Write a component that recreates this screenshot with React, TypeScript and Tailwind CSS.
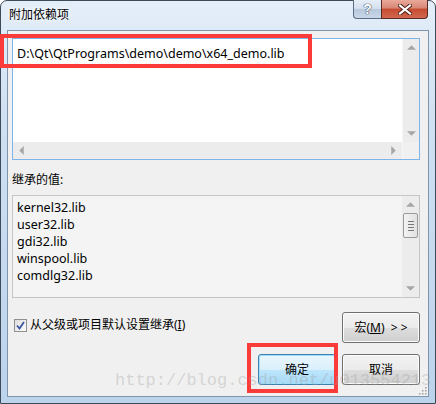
import React from 'react';

const FONT = 'font-["Noto_Sans","Noto_Sans_CJK_SC",sans-serif]';

// Windows 7 style arrow glyph for scrollbars
const Arrow = ({ dir }: { dir: 'up' | 'down' | 'left' | 'right' }) => {
    const pts = {
        up: '0,4 4,0 8,4',
        down: '0,0 8,0 4,4',
        left: '4,0 4,8 0,4',
        right: '0,0 0,8 4,4',
    }[dir];
    const horiz = dir === 'left' || dir === 'right';
    return (
        <svg width={horiz ? 5 : 9} height={horiz ? 9 : 5} viewBox={horiz ? '0 0 4 8' : '0 0 8 4'}>
            <polygon points={pts} fill="#a6a6a6" />
        </svg>
    );
};

const Button = ({ children, primary }: { children: React.ReactNode; primary?: boolean }) => (
    <div
        className={
            'w-[78px] h-[31px] rounded-[3px] border flex items-center justify-center text-[12px] text-black ' +
            (primary
                ? 'border-[#3c7fb1] bg-[linear-gradient(#eaf6fd_0%,#d9f0fc_50%,#bee6fd_51%,#a7d9f5_100%)] shadow-[inset_0_0_0_1px_#9fe0ff]'
                : 'border-[#707070] bg-[linear-gradient(#f2f2f2_0%,#ebebeb_50%,#dddddd_51%,#cfcfcf_100%)] shadow-[inset_0_0_0_1px_#fcfcfc]')
        }
    >
        {children}
    </div>
);

export default function App() {
    const inherited = ['kernel32.lib', 'user32.lib', 'gdi32.lib', 'winspool.lib', 'comdlg32.lib'];

    return (
        <div className={`w-[436px] h-[404px] relative overflow-hidden ${FONT}`}>
            {/* glass frame */}
            <div className="absolute inset-0 rounded-t-[7px] border border-[#3d4a5a] bg-[linear-gradient(180deg,#e4eef9_0%,#cfe0f2_30%,#bcd3ec_100%)]" />

            <div className="relative flex flex-col h-full">
                {/* title bar */}
                <div className="h-[30px] flex items-start">
                    <div className="pl-[9px] pt-[6px] text-[12px] leading-[18px] text-black [text-shadow:0_0_6px_#ffffff,0_0_3px_#ffffff]">
                        附加依赖项
                    </div>
                    <div className="ml-auto mr-[8px] flex">
                        <div className="w-[28px] h-[19px] rounded-bl-[4px] border border-t-0 border-r-0 border-[#5c6e85] bg-[linear-gradient(#e6eef7_0%,#d3dfed_50%,#b7c8dc_51%,#c9d8e8_100%)] flex items-center justify-center">
                            <span className="text-[14px] font-bold leading-none text-white [text-shadow:0_0_1px_#3b4c62,0_0_1px_#3b4c62,0_0_1px_#3b4c62] font-['Liberation_Sans',sans-serif]">?</span>
                        </div>
                        <div className="w-[47px] h-[19px] rounded-br-[4px] border border-t-0 border-[#5a2a22] bg-[linear-gradient(#e9a99b_0%,#d88674_45%,#c74a32_50%,#d0694f_100%)] flex items-center justify-center">
                            <svg width="14" height="11" viewBox="0 0 14 11">
                                <path d="M2 1.5 L12 9.5 M12 1.5 L2 9.5" stroke="#4b1c14" strokeWidth="4" strokeLinecap="square" />
                                <path d="M2 1.5 L12 9.5 M12 1.5 L2 9.5" stroke="#ffffff" strokeWidth="2.2" strokeLinecap="square" />
                            </svg>
                        </div>
                    </div>
                </div>

                {/* client area */}
                <div className="flex-1 mx-[7px] mb-[7px] border border-[#8094ab] bg-[#f0f0f0] flex flex-col pl-[4px] pr-[8px] relative">
                    {/* editable list */}
                    <div className="mt-[7px] h-[122px] border border-[#7eb4ea] bg-white flex">
                        <div className="flex-1 flex flex-col">
                            <div className="flex-1 pl-[4px] pt-[6px] text-[12.5px] leading-[17px] text-black">
                                D:\Qt\QtPrograms\demo\demo\x64_demo.lib
                            </div>
                            <div className="h-[17px] bg-[#ececec] flex items-center justify-between px-[6px]">
                                <Arrow dir="left" />
                                <Arrow dir="right" />
                            </div>
                        </div>
                        <div className="w-[17px] flex flex-col bg-[#ececec] border-l border-[#f6f6f6]">
                            <div className="h-[17px] flex items-center justify-center">
                                <Arrow dir="up" />
                            </div>
                            <div className="flex-1" />
                            <div className="h-[17px] flex items-center justify-center">
                                <Arrow dir="down" />
                            </div>
                            <div className="h-[17px] bg-[#f0f0f0]" />
                        </div>
                    </div>

                    <div className="mt-[11px] text-[12px] leading-[18px] text-black">继承的值:</div>

                    {/* inherited values */}
                    <div className="mt-[6px] h-[103px] border border-[#c5c5c5] bg-[#f4f4f4] flex">
                        <div className="flex-1 pl-[4px] pt-[3px] flex flex-col text-[12.5px] leading-[17px] text-black">
                            {inherited.map((item) => (
                                <div key={item}>{item}</div>
                            ))}
                        </div>
                        <div className="w-[17px] flex flex-col bg-[#ececec]">
                            <div className="h-[17px] flex items-center justify-center">
                                <Arrow dir="up" />
                            </div>
                            <div className="mx-[1px] h-[25px] rounded-[2px] border border-[#9a9a9a] bg-[linear-gradient(90deg,#f3f3f3,#e2e2e2)] flex flex-col items-center justify-center gap-[2px]">
                                <div className="w-[6px] h-[1px] bg-[#777]" />
                                <div className="w-[6px] h-[1px] bg-[#777]" />
                                <div className="w-[6px] h-[1px] bg-[#777]" />
                                <div className="w-[6px] h-[1px] bg-[#777]" />
                            </div>
                            <div className="flex-1" />
                            <div className="h-[17px] flex items-center justify-center">
                                <Arrow dir="down" />
                            </div>
                        </div>
                    </div>

                    {/* checkbox + macro button */}
                    <div className="mt-[14px] flex items-start">
                        <div className="ml-[2px] mt-[4px] flex items-center">
                            <div className="w-[13px] h-[13px] border border-[#8e8f8f] bg-[linear-gradient(135deg,#dcdcdc,#fdfdfd)] flex items-center justify-center">
                                <svg width="9" height="9" viewBox="0 0 9 9">
                                    <path d="M1 4.5 L3.5 7.5 L8 1" stroke="#3a55a0" strokeWidth="1.8" fill="none" />
                                </svg>
                            </div>
                            <span className="ml-[3px] text-[12px] leading-[18px] text-black">
                                从父级或项目默认设置继承(<span className="underline">I</span>)
                            </span>
                        </div>
                        <div className="ml-auto">
                            <Button>
                                <span>
                                    宏(<span className="underline">M</span>)&nbsp;&nbsp;&gt; &gt;
                                </span>
                            </Button>
                        </div>
                    </div>

                    {/* ok / cancel */}
                    <div className="mt-[11px] flex justify-end gap-[6px]">
                        <Button primary>确定</Button>
                        <Button>取消</Button>
                    </div>

                    {/* size grip */}
                    <svg className="absolute right-[1px] bottom-[1px]" width="10" height="10" viewBox="0 0 10 10">
                        {[
                            [8, 2], [8, 5], [5, 5], [8, 8], [5, 8], [2, 8],
                        ].map(([x, y]) => (
                            <rect key={`${x}-${y}`} x={x} y={y} width="1.5" height="1.5" fill="#a0a0a0" />
                        ))}
                    </svg>
                </div>
            </div>

            {/* annotation boxes */}
            <div className="absolute left-0 top-[34px] w-[312px] h-[34px] border-[4px] border-[#fb3a3a]" />
            <div className="absolute left-[247px] top-[343px] w-[91px] h-[50px] border-[4px] border-[#fb3a3a]" />

            {/* watermark */}
            <div className="absolute left-[115px] top-[371px] text-[17px] leading-[20px] text-[#9c9c9c]/35 font-['Liberation_Mono',monospace] whitespace-nowrap">
                http://blog.csdn.net/u013554213
            </div>
        </div>
    );
}
